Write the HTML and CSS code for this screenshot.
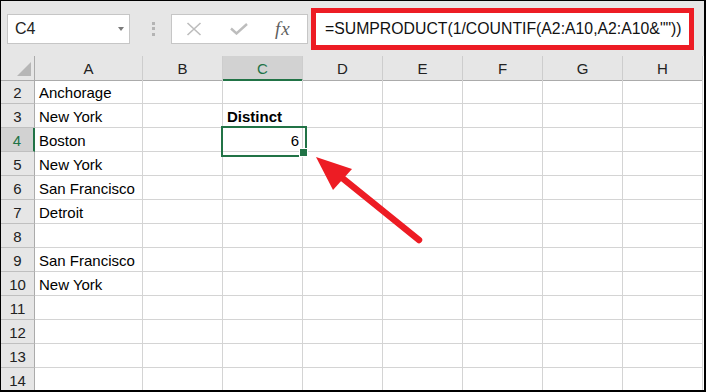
FILE: index.html
```html
<!DOCTYPE html>
<html lang="en">
<head>
    <meta charset="UTF-8">
    <meta name="viewport" content="width=device-width, initial-scale=1.0">
    <title>Distinct count</title>
    <link rel="stylesheet" href="styles.css">
</head>
<body>
    <div class="frame">
        <div class="toolbar">
            <div class="name-box">
                <span>C4</span>
                <span class="drop"></span>
            </div>
            <div class="grip"><i></i><i></i><i></i></div>
            <div class="fx-buttons">
                <svg class="btn-cancel" width="16" height="14" viewBox="0 0 16 14">
                    <path d="M1.5 1 L14.5 13 M14.5 1 L1.5 13" stroke="#bdbdbd" stroke-width="1.6" fill="none"/>
                </svg>
                <svg class="btn-enter" width="18" height="12" viewBox="0 0 18 12">
                    <path d="M1 5.5 L6.5 10.5 L17 1" stroke="#bdbdbd" stroke-width="2.4" fill="none"/>
                </svg>
                <span class="fx">fx</span>
            </div>
            <div class="formula">=SUMPRODUCT(1/COUNTIF(A2:A10,A2:A10&amp;""))</div>
        </div>

        <div class="sheet">
            <div class="row head">
                <div class="corner"></div>
                <div class="ch">A</div><div class="ch">B</div><div class="ch sel">C</div><div class="ch">D</div>
                <div class="ch">E</div><div class="ch">F</div><div class="ch">G</div><div class="ch">H</div>
            </div>
            <div class="row">
                <div class="rh">2</div><div class="c">Anchorage</div><div class="c"></div><div class="c"></div><div class="c"></div>
                <div class="c"></div><div class="c"></div><div class="c"></div><div class="c"></div>
            </div>
            <div class="row">
                <div class="rh">3</div><div class="c">New York</div><div class="c"></div><div class="c bold">Distinct</div><div class="c"></div>
                <div class="c"></div><div class="c"></div><div class="c"></div><div class="c"></div>
            </div>
            <div class="row">
                <div class="rh sel">4</div><div class="c">Boston</div><div class="c"></div><div class="c num active">6</div><div class="c"></div>
                <div class="c"></div><div class="c"></div><div class="c"></div><div class="c"></div>
            </div>
            <div class="row">
                <div class="rh">5</div><div class="c">New York</div><div class="c"></div><div class="c"></div><div class="c"></div>
                <div class="c"></div><div class="c"></div><div class="c"></div><div class="c"></div>
            </div>
            <div class="row">
                <div class="rh">6</div><div class="c">San Francisco</div><div class="c"></div><div class="c"></div><div class="c"></div>
                <div class="c"></div><div class="c"></div><div class="c"></div><div class="c"></div>
            </div>
            <div class="row">
                <div class="rh">7</div><div class="c">Detroit</div><div class="c"></div><div class="c"></div><div class="c"></div>
                <div class="c"></div><div class="c"></div><div class="c"></div><div class="c"></div>
            </div>
            <div class="row">
                <div class="rh">8</div><div class="c"></div><div class="c"></div><div class="c"></div><div class="c"></div>
                <div class="c"></div><div class="c"></div><div class="c"></div><div class="c"></div>
            </div>
            <div class="row">
                <div class="rh">9</div><div class="c">San Francisco</div><div class="c"></div><div class="c"></div><div class="c"></div>
                <div class="c"></div><div class="c"></div><div class="c"></div><div class="c"></div>
            </div>
            <div class="row">
                <div class="rh">10</div><div class="c">New York</div><div class="c"></div><div class="c"></div><div class="c"></div>
                <div class="c"></div><div class="c"></div><div class="c"></div><div class="c"></div>
            </div>
            <div class="row">
                <div class="rh">11</div><div class="c"></div><div class="c"></div><div class="c"></div><div class="c"></div>
                <div class="c"></div><div class="c"></div><div class="c"></div><div class="c"></div>
            </div>
            <div class="row">
                <div class="rh">12</div><div class="c"></div><div class="c"></div><div class="c"></div><div class="c"></div>
                <div class="c"></div><div class="c"></div><div class="c"></div><div class="c"></div>
            </div>
            <div class="row">
                <div class="rh">13</div><div class="c"></div><div class="c"></div><div class="c"></div><div class="c"></div>
                <div class="c"></div><div class="c"></div><div class="c"></div><div class="c"></div>
            </div>
            <div class="row">
                <div class="rh">14</div><div class="c"></div><div class="c"></div><div class="c"></div><div class="c"></div>
                <div class="c"></div><div class="c"></div><div class="c"></div><div class="c"></div>
            </div>
        </div>

        <!-- callout arrow pointing at the result cell -->
        <svg class="arrow" width="706" height="392" viewBox="0 0 706 392">
            <line x1="341" y1="177" x2="419" y2="240" stroke="#ed1c24" stroke-width="6.5" stroke-linecap="round"/>
            <polygon points="316,157 333,190 352,169" fill="#ed1c24"/>
        </svg>
    </div>
</body>
</html>
```

FILE: styles.css
```css
* {
    box-sizing: border-box;
}

body {
    margin: 0;
    font-family: "Liberation Sans", Arial, sans-serif;
    background: #fff;
}

.frame {
    position: relative;
    width: 706px;
    height: 392px;
    border-style: solid;
    border-color: #000;
    border-width: 1px 2px 2px 1px;
    background: #fff;
    overflow: hidden;
}

/* formula bar */
.toolbar {
    height: 55px;
    background: #e6e6e6;
    display: flex;
    align-items: center;
    padding-left: 6px;
}

.name-box {
    width: 123px;
    height: 30px;
    background: #fff;
    border: 1px solid #c6c6c6;
    display: flex;
    align-items: center;
    justify-content: space-between;
    padding: 0 5px 0 7px;
    font-size: 16px;
    color: #222;
}

.drop {
    width: 0;
    height: 0;
    border-left: 3px solid transparent;
    border-right: 3px solid transparent;
    border-top: 4px solid #7a7a7a;
}

.grip {
    display: flex;
    flex-direction: column;
    gap: 2.5px;
    margin-left: 22px;
}

.grip i {
    display: block;
    width: 3px;
    height: 3px;
    background: #b4b4b4;
}

.fx-buttons {
    width: 137px;
    height: 30px;
    margin-left: 16px;
    background: #fff;
    border: 1px solid #c6c6c6;
    display: flex;
    align-items: center;
    padding-left: 14px;
}

.btn-enter {
    margin-left: 28px;
}

.fx {
    margin-left: 27px;
    font-family: "Liberation Serif", "Times New Roman", serif;
    font-style: italic;
    font-size: 19px;
    color: #5f5f5f;
    letter-spacing: 1px;
}

.formula {
    width: 383px;
    height: 42px;
    margin-left: 3px;
    background: #fff;
    border: 5px solid #ed1c24;
    padding-left: 9px;
    display: flex;
    align-items: center;
    font-size: 15.8px;
    color: #111;
    white-space: nowrap;
}

/* grid */
.row {
    display: grid;
    grid-template-columns: 34px 108px repeat(7, 80px);
    height: 24px;
}

.row > div {
    border-right: 1px solid #d4d4d4;
    border-bottom: 1px solid #d4d4d4;
    padding-top: 2px;
    line-height: 21px;
    font-size: 15px;
    white-space: nowrap;
}

.head > div {
    background: #e6e6e6;
    border-right-color: #cdcdcd;
    border-bottom-color: #ababab;
    text-align: center;
    color: #222;
}

.corner {
    position: relative;
}

.corner::after {
    content: "";
    position: absolute;
    right: 3px;
    bottom: 4px;
    width: 0;
    height: 0;
    border-left: 14px solid transparent;
    border-bottom: 14px solid #b6b6b6;
}

.row > .corner {
    border-right-color: #ababab;
}

.ch.sel {
    background: #d2d2d2;
    color: #217346;
    border-bottom: 2px solid #217346;
}

.row > .rh {
    background: #e6e6e6;
    border-right-color: #ababab;
    border-bottom-color: #bfbfbf;
    text-align: center;
    color: #222;
}

.row > .rh.sel {
    background: #d2d2d2;
    color: #217346;
    border-right: 2px solid #217346;
}

.c {
    padding-left: 4px;
    color: #000;
}

.bold {
    font-weight: bold;
}

.row > .num {
    text-align: right;
    padding-right: 3px;
}

.active {
    position: relative;
}

.active::after {
    content: "";
    position: absolute;
    left: -2px;
    top: -2px;
    width: 82px;
    height: 27px;
    border: 2px solid #217346;
    z-index: 2;
}

.active::before {
    content: "";
    position: absolute;
    left: 76px;
    top: 20px;
    width: 7px;
    height: 7px;
    background: #217346;
    border: 1px solid #fff;
    z-index: 3;
}

.arrow {
    position: absolute;
    left: -1px;
    top: -1px;
    pointer-events: none;
}
```
